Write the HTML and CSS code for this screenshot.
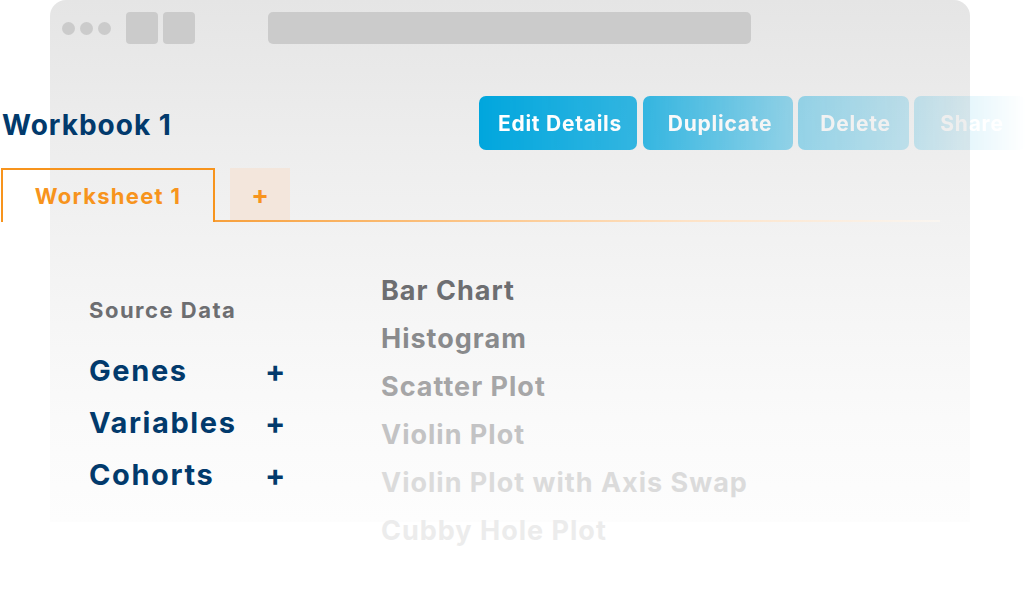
FILE: index.html
```html
<!DOCTYPE html>
<html lang="en">
<head>
<meta charset="utf-8">
<title>Workbook 1</title>
<link rel="stylesheet" href="styles.css">
</head>
<body>
<div class="stage">
  <div class="window">
    <div class="chrome">
      <div class="dots"><span class="dot"></span><span class="dot"></span><span class="dot"></span></div>
      <div class="navs"><span class="nav"></span><span class="nav"></span></div>
      <div class="address"></div>
    </div>
    <div class="content">
      <div class="header">
        <h1 class="title">Workbook 1</h1>
        <div class="actions">
          <button class="btn btn-edit">Edit Details</button>
          <button class="btn btn-dup">Duplicate</button>
          <button class="btn btn-del">Delete</button>
          <button class="btn btn-share">Share</button>
        </div>
      </div>
      <div class="tabs">
        <div class="tab tab-active">Worksheet 1</div>
        <div class="tab-rest">
          <div class="tab-add">+</div>
        </div>
      </div>
      <div class="panel">
        <div class="sources">
          <div class="sources-label">Source Data</div>
          <div class="source-row"><span class="source-name">Genes</span><span class="source-add">+</span></div>
          <div class="source-row"><span class="source-name">Variables</span><span class="source-add">+</span></div>
          <div class="source-row"><span class="source-name">Cohorts</span><span class="source-add">+</span></div>
        </div>
        <ul class="charts">
          <li class="chart c1">Bar Chart</li>
          <li class="chart c2">Histogram</li>
          <li class="chart c3">Scatter Plot</li>
          <li class="chart c4">Violin Plot</li>
          <li class="chart c5">Violin Plot with Axis Swap</li>
          <li class="chart c6">Cubby Hole Plot</li>
        </ul>
      </div>
    </div>
  </div>
</div>
</body>
</html>
```
FILE: styles.css
```css
* { box-sizing: border-box; }
html, body {
  margin: 0;
  padding: 0;
  background: #ffffff;
}
body {
  width: 1026px;
  height: 600px;
  overflow: hidden;
  font-family: Inter, "Open Sans", sans-serif;
  font-weight: 700;
}
.stage {
  width: 1026px;
  height: 600px;
}
.window {
  margin-left: 50px;
  width: 920px;
  height: 522px;
  border-radius: 16px 16px 0 0;
  background: linear-gradient(to bottom, #e5e5e5 0%, #eeeeee 30%, #f5f5f5 58%, #fafafa 80%, #fdfdfd 100%);
}
.chrome {
  display: flex;
  align-items: center;
  height: 56px;
  padding: 12px 0 12px 12px;
}
.dots {
  display: flex;
  gap: 5px;
}
.dot {
  width: 13px;
  height: 13px;
  border-radius: 50%;
  background: #cbcbcb;
}
.navs {
  display: flex;
  gap: 5px;
  margin-left: 15px;
}
.nav {
  width: 32px;
  height: 32px;
  border-radius: 4px;
  background: #cbcbcb;
}
.address {
  margin-left: 73px;
  width: 483px;
  height: 32px;
  border-radius: 5px;
  background: #cbcbcb;
}
.content {
  margin-left: -50px;
  width: 1026px;
}
.header {
  display: flex;
  align-items: center;
  justify-content: space-between;
  margin-top: 40px;
  height: 54px;
}
.title {
  margin: 3px 0 0 2px;
  font-size: 28px;
  font-weight: 700;
  letter-spacing: 1px;
  color: #023a6c;
  line-height: 1;
}
.actions {
  display: flex;
  gap: 5px;
  -webkit-mask-image: linear-gradient(to right, #000 0%, rgba(0,0,0,0.78) 30%, rgba(0,0,0,0.38) 58%, rgba(0,0,0,0.2) 79%, rgba(0,0,0,0) 100%);
  mask-image: linear-gradient(to right, #000 0%, rgba(0,0,0,0.78) 30%, rgba(0,0,0,0.38) 58%, rgba(0,0,0,0.2) 79%, rgba(0,0,0,0) 100%);
}
.btn {
  height: 54px;
  border: 0;
  border-radius: 7px;
  background: #00a6dd;
  color: #ffffff;
  font-family: inherit;
  font-weight: 700;
  font-size: 21px;
  letter-spacing: 0.75px;
  padding: 0 0 0 4px;
}
.btn-edit { width: 158px; }
.btn-dup { width: 150px; margin-left: 1px; }
.btn-del { width: 111px; }
.btn-share { width: 112px; }
.tabs {
  display: flex;
  align-items: flex-end;
  margin-top: 18px;
  height: 54px;
}
.tab-active {
  margin-left: 1px;
  width: 214px;
  height: 54px;
  border: 2px solid #f7941d;
  border-bottom: 0;
  display: flex;
  align-items: center;
  justify-content: center;
  color: #f7941d;
  font-size: 22px;
  letter-spacing: 1.3px;
}
.tab-rest {
  width: 725px;
  height: 54px;
  padding-left: 15px;
  padding-bottom: 2px;
  background-image: linear-gradient(to right, #f7a03c 0%, #fcc68a 36%, #fde2c6 65%, rgba(255,248,240,0.6) 100%);
  background-repeat: no-repeat;
  background-position: left bottom;
  background-size: 100% 2px;
}
.tab-add {
  width: 60px;
  height: 52px;
  background: #f3e6dc;
  color: #f7941d;
  font-size: 26px;
  display: flex;
  align-items: center;
  justify-content: center;
}
.panel {
  display: flex;
  margin-top: 45px;
  padding-left: 89px;
}
.sources {
  width: 292px;
}
.sources-label {
  margin-top: 29px;
  height: 28px;
  line-height: 28px;
  font-size: 22px;
  letter-spacing: 1.5px;
  color: #6d6e71;
}
.source-row {
  display: flex;
  height: 52px;
  line-height: 52px;
  color: #023a6c;
}
.sources-label + .source-row { margin-top: 21px; }
.source-name {
  width: 176px;
  font-size: 29px;
  letter-spacing: 1.6px;
}
.source-add {
  width: 18px;
  text-align: center;
  font-size: 30px;
}
.charts {
  list-style: none;
  margin: 0;
  padding: 0;
}
.chart {
  height: 48px;
  line-height: 48px;
  font-size: 27px;
  letter-spacing: 1px;
  white-space: nowrap;
}
.c1 { color: #6d6e71; }
.c2 { color: #898a8c; }
.c3 { color: #a6a6a7; }
.c4 { color: #c3c3c4; }
.c5 { color: #dbdbdb; }
.c6 { color: #ececec; }
```
